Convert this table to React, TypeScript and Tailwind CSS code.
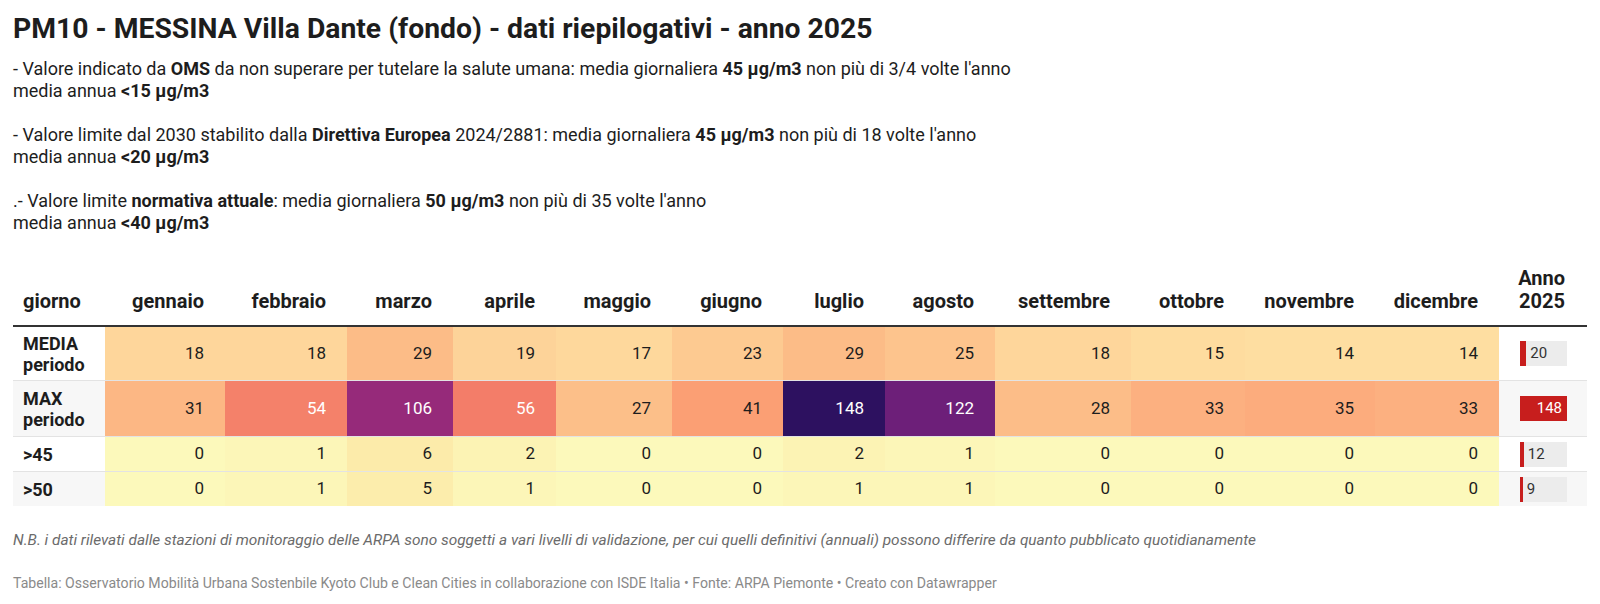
import React from 'react';

type Cell = { v: number; bg: string; light?: boolean };

const months = [
  'gennaio', 'febbraio', 'marzo', 'aprile', 'maggio', 'giugno',
  'luglio', 'agosto', 'settembre', 'ottobre', 'novembre', 'dicembre',
];

const rows: { label: string[]; h: string; striped: boolean; cells: Cell[]; year: number }[] = [
  {
    label: ['MEDIA', 'periodo'],
    h: 'h-[54px]',
    striped: false,
    year: 20,
    cells: [
      { v: 18, bg: 'bg-[#fed69b]' },
      { v: 18, bg: 'bg-[#fed69b]' },
      { v: 29, bg: 'bg-[#fcbc87]' },
      { v: 19, bg: 'bg-[#fdd399]' },
      { v: 17, bg: 'bg-[#fed89c]' },
      { v: 23, bg: 'bg-[#fdca91]' },
      { v: 29, bg: 'bg-[#fcbc87]' },
      { v: 25, bg: 'bg-[#fdc48d]' },
      { v: 18, bg: 'bg-[#fed69b]' },
      { v: 15, bg: 'bg-[#fedc9f]' },
      { v: 14, bg: 'bg-[#fedea1]' },
      { v: 14, bg: 'bg-[#fedea1]' },
    ],
  },
  {
    label: ['MAX', 'periodo'],
    h: 'h-[56px]',
    striped: true,
    year: 148,
    cells: [
      { v: 31, bg: 'bg-[#fcb784]' },
      { v: 54, bg: 'bg-[#f4816a]', light: true },
      { v: 106, bg: 'bg-[#962a7a]', light: true },
      { v: 56, bg: 'bg-[#f37d69]', light: true },
      { v: 27, bg: 'bg-[#fcbf89]' },
      { v: 41, bg: 'bg-[#fb9f74]' },
      { v: 148, bg: 'bg-[#2d1160]', light: true },
      { v: 122, bg: 'bg-[#6d1f79]', light: true },
      { v: 28, bg: 'bg-[#fcbd88]' },
      { v: 33, bg: 'bg-[#fcb080]' },
      { v: 35, bg: 'bg-[#fcac7d]' },
      { v: 33, bg: 'bg-[#fcb080]' },
    ],
  },
  {
    label: ['>45'],
    h: 'h-[35px]',
    striped: false,
    year: 12,
    cells: [
      { v: 0, bg: 'bg-[#fcf9bb]' },
      { v: 1, bg: 'bg-[#fcf6b8]' },
      { v: 6, bg: 'bg-[#fcebaa]' },
      { v: 2, bg: 'bg-[#fcf3b4]' },
      { v: 0, bg: 'bg-[#fcf9bb]' },
      { v: 0, bg: 'bg-[#fcf9bb]' },
      { v: 2, bg: 'bg-[#fcf3b4]' },
      { v: 1, bg: 'bg-[#fcf6b8]' },
      { v: 0, bg: 'bg-[#fcf9bb]' },
      { v: 0, bg: 'bg-[#fcf9bb]' },
      { v: 0, bg: 'bg-[#fcf9bb]' },
      { v: 0, bg: 'bg-[#fcf9bb]' },
    ],
  },
  {
    label: ['>50'],
    h: 'h-[34px]',
    striped: true,
    year: 9,
    cells: [
      { v: 0, bg: 'bg-[#fcf9bb]' },
      { v: 1, bg: 'bg-[#fcf6b8]' },
      { v: 5, bg: 'bg-[#fcedac]' },
      { v: 1, bg: 'bg-[#fcf6b8]' },
      { v: 0, bg: 'bg-[#fcf9bb]' },
      { v: 0, bg: 'bg-[#fcf9bb]' },
      { v: 1, bg: 'bg-[#fcf6b8]' },
      { v: 1, bg: 'bg-[#fcf6b8]' },
      { v: 0, bg: 'bg-[#fcf9bb]' },
      { v: 0, bg: 'bg-[#fcf9bb]' },
      { v: 0, bg: 'bg-[#fcf9bb]' },
      { v: 0, bg: 'bg-[#fcf9bb]' },
    ],
  },
];

const grid =
  'grid grid-cols-[92px_120px_122px_106px_103px_116px_111px_102px_110px_136px_114px_130px_124px_88px]';

function YearBar({ value }: { value: number }) {
  const max = 148;
  const w = Math.max(2, (value / max) * 47);
  return (
    <div className="relative h-[25px] w-[47px] bg-[#ececec]">
      <div className="absolute left-0 top-0 h-full bg-[#c71e1d]" style={{ width: `${w}px` }} />
      {value === max ? (
        <span className="absolute right-[5px] top-0 text-[15px] leading-[25px] text-white">{value}</span>
      ) : (
        <span className="absolute top-0 text-[15px] leading-[25px] text-[#333]" style={{ left: `${w + 4}px` }}>
          {value}
        </span>
      )}
    </div>
  );
}

export default function App() {
  return (
    <div className="w-[1600px] h-[604px] bg-white px-[13px] pt-[12px] text-[#1d1d1d] font-['Roboto','Liberation_Sans',sans-serif]">
      <h1 className="text-[28.3px] font-bold leading-[34px]">
        PM10 - MESSINA Villa Dante (fondo) - dati riepilogativi - anno 2025
      </h1>

      <div className="mt-[12px] text-[18px] leading-[22px]">
        <p>
          - Valore indicato da <b>OMS</b> da non superare per tutelare la salute umana: media giornaliera{' '}
          <b>45 µg/m3</b> non più di 3/4 volte l'anno
          <br />
          media annua <b>&lt;15 µg/m3</b>
        </p>
        <br />
        <p>
          - Valore limite dal 2030 stabilito dalla <b>Direttiva Europea</b> 2024/2881: media giornaliera{' '}
          <b>45 µg/m3</b> non più di 18 volte l'anno
          <br />
          media annua <b>&lt;20 µg/m3</b>
        </p>
        <br />
        <p>
          .- Valore limite <b>normativa attuale</b>: media giornaliera <b>50 µg/m3</b> non più di 35 volte l'anno
          <br />
          media annua <b>&lt;40 µg/m3</b>
        </p>
      </div>

      <div className="mt-[33px] w-[1574px]">
        <div className={`${grid} border-b-2 border-[#333] text-[20px] font-bold leading-[23px]`}>
          <div className="flex items-end pl-[10px] pb-[12px]">giorno</div>
          {months.map((m) => (
            <div key={m} className="flex items-end justify-end pr-[21px] pb-[12px]">
              {m}
            </div>
          ))}
          <div className="flex items-end justify-end pr-[22px] pb-[12px] text-right">
            Anno
            <br />
            2025
          </div>
        </div>

        {rows.map((r, i) => (
          <div
            key={i}
            className={`${grid} ${i < rows.length - 1 ? 'border-b border-[#e3e3e3]' : ''} ${r.h} text-[17px]`}
          >
            <div
              className={`flex flex-col justify-center pl-[10px] text-[18px] font-bold leading-[21px] ${
                r.striped ? 'bg-[#f7f7f7]' : 'bg-white'
              }`}
            >
              {r.label.map((l) => (
                <span key={l}>{l}</span>
              ))}
            </div>
            {r.cells.map((c, j) => (
              <div
                key={j}
                className={`flex items-center justify-end pr-[21px] ${c.bg} ${
                  c.light ? 'text-white' : 'text-[#1d1d1d]'
                }`}
              >
                {c.v}
              </div>
            ))}
            <div className={`flex items-center pl-[21px] ${r.striped ? 'bg-[#f7f7f7]' : 'bg-white'}`}>
              <YearBar value={r.year} />
            </div>
          </div>
        ))}
      </div>

      <p className="mt-[24px] text-[15.4px] italic leading-[20px] text-[#6b6b6b]">
        N.B. i dati rilevati dalle stazioni di monitoraggio delle ARPA sono soggetti a vari livelli di validazione, per
        cui quelli definitivi (annuali) possono differire da quanto pubblicato quotidianamente
      </p>
      <p className="mt-[24px] text-[14.1px] leading-[18px] text-[#8a8a8a]">
        Tabella: Osservatorio Mobilità Urbana Sostenbile Kyoto Club e Clean Cities in collaborazione con ISDE Italia •
        Fonte: ARPA Piemonte • Creato con Datawrapper
      </p>
    </div>
  );
}
